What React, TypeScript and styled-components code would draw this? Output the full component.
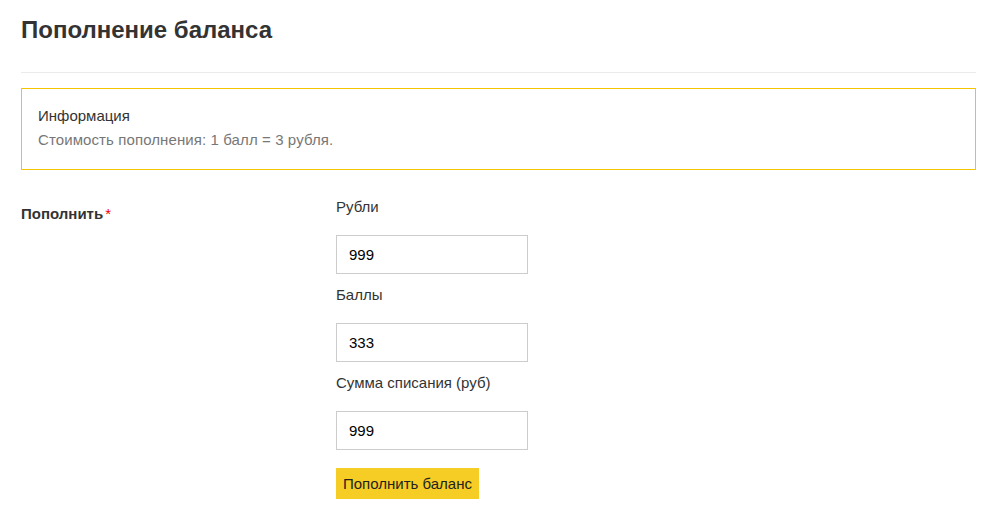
import React from "react";
import styled, { createGlobalStyle } from "styled-components";

const Global = createGlobalStyle`
  html, body { margin: 0; padding: 0; background: #fff; }
  body { font-family: "Liberation Sans", Arial, sans-serif; color: #333; }
  * { box-sizing: border-box; }
`;

const Page = styled.div`
  padding: 0 22px 0 21px;
  width: 998px;
`;

const Title = styled.h1`
  margin: 0;
  padding-top: 16px;
  height: 73px;
  font-size: 24px;
  line-height: 28px;
  font-weight: 700;
  color: #333;
  border-bottom: 1px solid #ebebeb;
`;

const InfoBox = styled.div`
  margin-top: 15px;
  border: 1px solid #f5c400;
  height: 82px;
  padding: 17px 16px 0 16px;
`;

const InfoTitle = styled.div`
  font-size: 15px;
  line-height: 20px;
  color: #333;
`;

const InfoText = styled.div`
  margin-top: 4px;
  font-size: 15px;
  line-height: 20px;
  color: #777;
  letter-spacing: 0.1px;
`;

const FormRow = styled.div`
  display: grid;
  grid-template-columns: 315px 1fr;
  margin-top: 26px;
`;

const RowLabel = styled.div`
  padding-top: 8px;
  font-size: 15px;
  line-height: 20px;
  font-weight: 700;
  color: #333;
`;

const Star = styled.span`
  color: #e00;
  font-weight: 400;
  margin-left: 2px;
`;

const Fields = styled.div`
  display: flex;
  flex-direction: column;
  align-items: flex-start;
`;

const FieldLabel = styled.div`
  font-size: 15px;
  line-height: 20px;
  color: #333;
  margin-top: 11px;
  margin-bottom: 18px;
  &:first-child { margin-top: 1px; }
`;

const Input = styled.input`
  width: 192px;
  height: 39px;
  border: 1px solid #ccc;
  padding: 0 12px;
  font-family: "Liberation Sans", Arial, sans-serif;
  font-size: 15px;
  color: #000;
  outline: none;
`;

const Button = styled.button`
  margin-top: 18px;
  height: 31px;
  padding: 0 7px;
  background: #f6cd24;
  border: none;
  font-family: "Liberation Sans", Arial, sans-serif;
  font-size: 15px;
  color: #222;
  cursor: pointer;
`;

const fields = [
  { label: "Рубли", value: "999" },
  { label: "Баллы", value: "333" },
  { label: "Сумма списания (руб)", value: "999" },
];

export default function App() {
  return (
    <Page>
      <Global />
      <Title>Пополнение баланса</Title>
      <InfoBox>
        <InfoTitle>Информация</InfoTitle>
        <InfoText>Стоимость пополнения: 1 балл = 3 рубля.</InfoText>
      </InfoBox>
      <FormRow>
        <RowLabel>
          Пополнить<Star>*</Star>
        </RowLabel>
        <Fields>
          {fields.map((f) => (
            <React.Fragment key={f.label}>
              <FieldLabel>{f.label}</FieldLabel>
              <Input defaultValue={f.value} />
            </React.Fragment>
          ))}
          <Button>Пополнить баланс</Button>
        </Fields>
      </FormRow>
    </Page>
  );
}
